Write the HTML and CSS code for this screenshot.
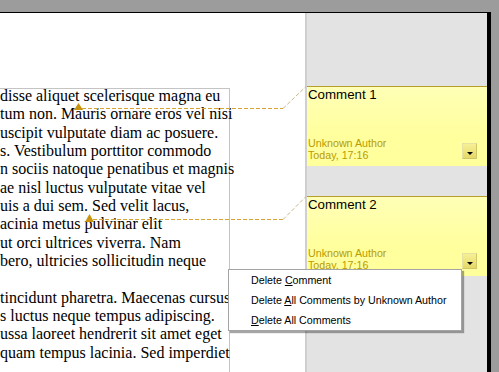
FILE: index.html
```html
<!DOCTYPE html>
<html>
<head>
<meta charset="utf-8">
<link rel="stylesheet" href="styles.css">
</head>
<body>
<div class="topbar"></div>
<div class="row">
  <div class="window">
    <div class="page">
      <div class="textarea">
        <div class="text">
          <div class="ln">disse aliquet scelerisque magna eu</div>
          <div class="ln">tum non. Mauris ornare eros vel nisi</div>
          <div class="ln">uscipit vulputate diam ac posuere.</div>
          <div class="ln">s. Vestibulum porttitor commodo</div>
          <div class="ln">n sociis natoque penatibus et magnis</div>
          <div class="ln">ae nisl luctus vulputate vitae vel</div>
          <div class="ln">uis a dui sem. Sed velit lacus,</div>
          <div class="ln">acinia metus pulvinar elit</div>
          <div class="ln">ut orci ultrices viverra. Nam</div>
          <div class="ln">bero, ultricies sollicitudin neque</div>
          <div class="ln">&nbsp;</div>
          <div class="ln">tincidunt pharetra. Maecenas cursus</div>
          <div class="ln">s luctus neque tempus adipiscing.</div>
          <div class="ln">ussa laoreet hendrerit sit amet eget</div>
          <div class="ln">quam tempus lacinia. Sed imperdiet</div>
        </div>
      </div>
    </div>
    <div class="sidebar">
      <div class="note note-first">
        <div class="note-text">Comment 1</div>
        <div class="note-foot">
          <div class="author">Unknown Author<br>Today, 17:16</div>
          <div class="btn"><span class="arrow"></span></div>
        </div>
      </div>
      <div class="note">
        <div class="note-text">Comment 2</div>
        <div class="note-foot">
          <div class="author">Unknown Author<br>Today, 17:16</div>
          <div class="btn"><span class="arrow"></span></div>
        </div>
      </div>
    </div>
  </div>
  <div class="rightgap"></div>
</div>

<svg class="links" width="499" height="372" viewBox="0 0 499 372">
  <path d="M82 108.5 H283" class="dash"/>
  <path d="M283 108.5 L306 86.5" class="dash diag"/>
  <polygon points="74,110 83,110 78.5,103" class="anchor"/>
  <path d="M93 219.5 H283" class="dash"/>
  <path d="M283 219.5 L306 196.5" class="dash diag"/>
  <polygon points="85,222 94,222 89.5,214" class="anchor"/>
</svg>

<div class="menu">
  <div class="item">Delete <u>C</u>omment</div>
  <div class="item">Delete <u>A</u>ll Comments by Unknown Author</div>
  <div class="item"><u>D</u>elete All Comments</div>
</div>
</body>
</html>
```

FILE: styles.css
```css
html, body {
  margin: 0;
  padding: 0;
  width: 499px;
  height: 372px;
  overflow: hidden;
  background: #9c9c9c;
}

.topbar {
  height: 12px;
  background: #9c9c9c;
}

.row {
  display: flex;
  height: 360px;
}

.window {
  display: flex;
  width: 487px;
  border-top: 1px solid #000;
  border-right: 4px solid #000;
}

.rightgap {
  width: 8px;
  background: #9c9c9c;
}

.page {
  width: 305px;
  background: #fff;
  border-right: 2px solid #cfcfcf;
  overflow: hidden;
}

.textarea {
  margin-top: 75px;
  width: 229px;
  border-top: 1px solid #c4c4c4;
  border-right: 1px solid #c4c4c4;
  height: 400px;
}

.text {
  margin-top: -2px;
  font-family: "Liberation Serif", "Times New Roman", serif;
  font-size: 16px;
  line-height: 18.35px;
  color: #000;
}

.ln {
  white-space: pre;
}

.sidebar {
  width: 180px;
  background: #e3e3e3;
  display: flex;
  flex-direction: column;
  gap: 30px;
  padding-top: 73px;
}

.note {
  height: 80px;
  box-sizing: border-box;
  border-top: 1px solid #b59e2c;
  background: linear-gradient(#ffffb6, #ffff9e 60%, #ffff9c);
  display: flex;
  flex-direction: column;
  padding-left: 1px;
  font-family: "Liberation Sans", Arial, sans-serif;
}

.note-text {
  font-size: 13.3px;
  line-height: 15px;
  color: #000;
}

.note-foot {
  margin-top: auto;
  display: flex;
  justify-content: space-between;
  align-items: flex-end;
  padding-bottom: 4px;
}

.author {
  font-size: 10.7px;
  line-height: 12px;
  color: #b89c00;
  padding-bottom: 1px;
}

.btn {
  width: 15px;
  height: 16px;
  box-sizing: border-box;
  margin-right: 10px;
  margin-bottom: 3px;
  background: linear-gradient(#f6f096, #e4d868);
  border: 1px solid #e8e0a0;
  border-right-color: #d2c668;
  border-bottom-color: #d2c668;
  display: flex;
  justify-content: center;
  align-items: flex-end;
  padding-bottom: 3px;
}

.arrow {
  width: 0;
  height: 0;
  border-left: 3px solid transparent;
  border-right: 3px solid transparent;
  border-top: 3px solid #000;
}

.links {
  position: absolute;
  left: 0;
  top: 0;
  pointer-events: none;
}

.dash {
  fill: none;
  stroke: #d8a431;
  stroke-width: 1;
  stroke-dasharray: 4 2;
}

.diag {
  stroke: #c9b88c;
}

.anchor {
  fill: #c8940e;
}

.menu {
  position: absolute;
  left: 228px;
  top: 269px;
  width: 234px;
  box-sizing: border-box;
  background: #fff;
  border: 1px solid #a4a4a4;
  box-shadow: 2px 2px 1px rgba(0, 0, 0, 0.35);
  padding-left: 22px;
  font-family: "Liberation Sans", Arial, sans-serif;
  font-size: 10.7px;
  color: #000;
}

.item {
  height: 20px;
  line-height: 20px;
  white-space: nowrap;
}

.item u {
  text-decoration: underline;
}
```
